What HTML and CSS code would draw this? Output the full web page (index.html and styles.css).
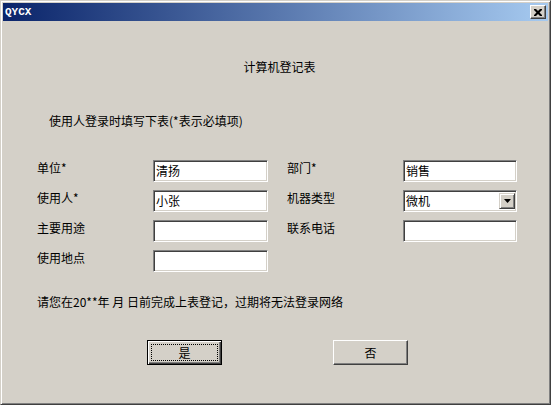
FILE: index.html
```html
<!DOCTYPE html>
<html lang="zh">
<head>
<meta charset="utf-8">
<title>QYCX</title>
<link rel="stylesheet" href="styles.css">
</head>
<body>
<div class="window">
  <div class="titlebar">
    <span class="title">QYCX</span>
    <span class="close">
      <svg width="8" height="7" viewBox="0 0 8 7"><path d="M0 0h2l2 2 2-2h2v1l-2.5 2.5L8 6v1H6L4 5 2 7H0V6l2.5-2.5L0 1z" fill="#000"/></svg>
    </span>
  </div>
  <div class="content">
    <div class="heading">计算机登记表</div>
    <div class="subtitle">使用人登录时填写下表(*表示必填项)</div>
    <div class="form">
      <div class="label">单位*</div>
      <div class="field">清扬</div>
      <div class="label right">部门*</div>
      <div class="field">销售</div>
      <div class="label">使用人*</div>
      <div class="field">小张</div>
      <div class="label right">机器类型</div>
      <div class="field combo"><span class="value">微机</span><span class="drop"><svg width="7" height="4" viewBox="0 0 7 4"><path d="M0 0h7L3.5 4z" fill="#000"/></svg></span></div>
      <div class="label">主要用途</div>
      <div class="field"></div>
      <div class="label right">联系电话</div>
      <div class="field"></div>
      <div class="label">使用地点</div>
      <div class="field"></div>
    </div>
    <div class="notice">请您在20**年 月 日前完成上表登记，过期将无法登录网络</div>
    <div class="buttons">
      <div class="btn default"><span class="focus">是</span></div>
      <div class="btn"><span class="cap">否</span></div>
    </div>
  </div>
</div>
</body>
</html>
```
FILE: styles.css
```css
html, body {
  margin: 0;
  padding: 0;
  background: #d4d0c8;
}
.window {
  width: 551px;
  height: 405px;
  box-sizing: border-box;
  background: #d4d0c8;
  border: 1px solid;
  border-color: #d4d0c8 #404040 #404040 #d4d0c8;
  box-shadow: inset 1px 1px #ffffff, inset -1px -1px #808080;
  padding: 2px;
  font-family: "Noto Sans CJK SC", "Liberation Sans", sans-serif;
  font-size: 12px;
  line-height: 14px;
  color: #000;
}
.titlebar {
  height: 18px;
  background: linear-gradient(to right, #0a246a, #a6caf0);
  display: flex;
  align-items: center;
  justify-content: space-between;
  padding: 0 2px;
}
.title {
  color: #fff;
  font-family: "Liberation Mono", monospace;
  font-weight: bold;
  font-size: 11px;
}
.close {
  width: 16px;
  height: 14px;
  box-sizing: border-box;
  background: #d4d0c8;
  border: 1px solid;
  border-color: #fff #404040 #404040 #fff;
  box-shadow: inset -1px -1px #808080;
  display: flex;
  align-items: center;
  justify-content: center;
}
.content {
  display: flex;
  flex-direction: column;
}
.heading {
  margin-top: 39px;
  text-align: center;
  padding-left: 8px;
}
.subtitle {
  margin-top: 40px;
  padding-left: 46px;
}
.form {
  margin-top: 32px;
  padding-left: 34px;
  display: grid;
  grid-template-columns: 116px 115px 135px 114px;
  grid-auto-rows: 22px;
  row-gap: 8px;
}
.label {
  padding-top: 1px;
}
.label.right {
  padding-left: 19px;
}
.field {
  box-sizing: border-box;
  background: #fff;
  border: 1px solid;
  border-color: #808080 #ffffff #ffffff #808080;
  box-shadow: inset 1px 1px #404040, inset -1px -1px #d4d0c8;
  padding: 3px 2px 0 2px;
  white-space: nowrap;
}
.combo {
  display: flex;
  justify-content: space-between;
  align-items: flex-start;
  padding: 2px 2px 0 2px;
}
.combo .value {
  padding-top: 1px;
}
.drop {
  width: 16px;
  height: 16px;
  box-sizing: border-box;
  background: #d4d0c8;
  border: 1px solid;
  border-color: #d4d0c8 #404040 #404040 #d4d0c8;
  box-shadow: inset 1px 1px #fff, inset -1px -1px #808080;
  display: flex;
  align-items: center;
  justify-content: center;
  margin-right: -1px;
}
.notice {
  margin-top: 23px;
  padding-left: 34px;
}
.buttons {
  margin-top: 31px;
  padding-left: 144px;
  display: flex;
  gap: 111px;
}
.btn {
  width: 75px;
  height: 25px;
  box-sizing: border-box;
  background: #d4d0c8;
  border: 1px solid;
  border-color: #fff #404040 #404040 #fff;
  box-shadow: inset -1px -1px #808080;
  display: flex;
  align-items: center;
  justify-content: center;
}
.btn.default {
  border: 1px solid #000;
  box-shadow: inset 1px 1px #fff, inset -1px -1px #404040, inset -2px -2px #808080;
  padding: 3px;
}
.focus {
  flex: 1;
  align-self: stretch;
  border: 1px dotted #000;
  display: flex;
  align-items: center;
  justify-content: center;
}
```
